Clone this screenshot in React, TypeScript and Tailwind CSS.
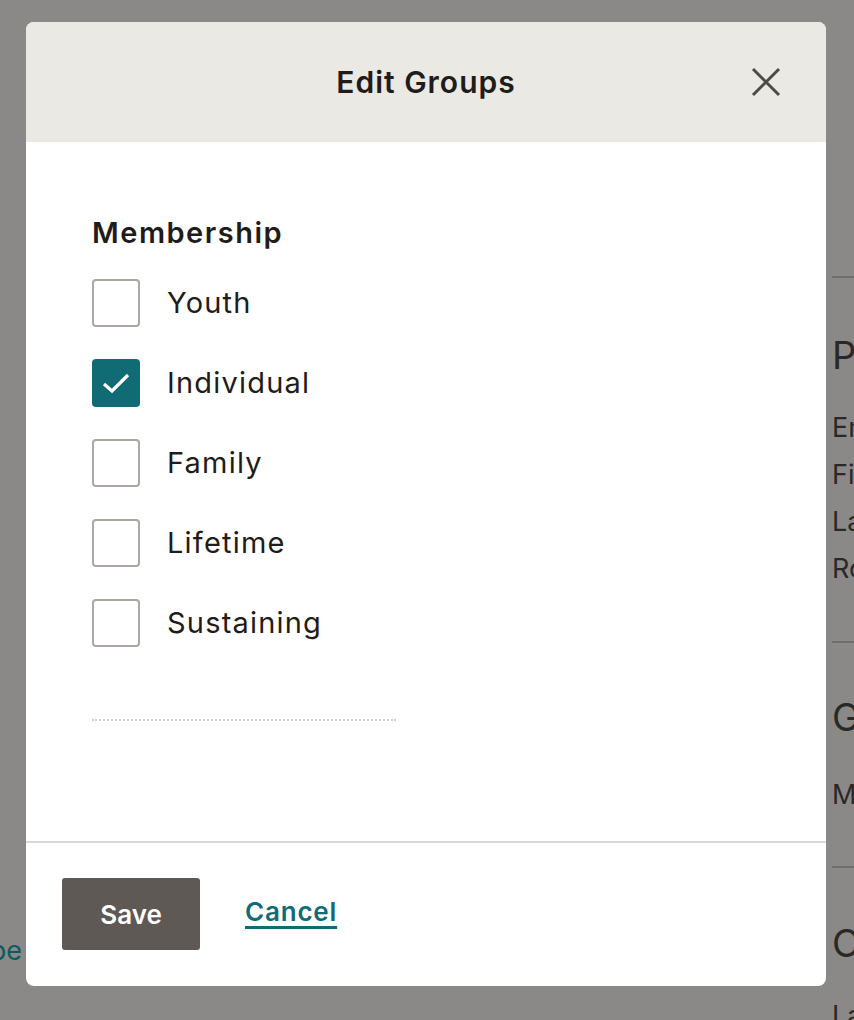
import React from "react";

const items = [
  { label: "Youth", checked: false },
  { label: "Individual", checked: true },
  { label: "Family", checked: false },
  { label: "Lifetime", checked: false },
  { label: "Sustaining", checked: false },
];

export default function App() {
  return (
    <div
      className="relative w-[854px] h-[1020px] overflow-hidden bg-[#8a8987]"
      style={{ fontFamily: "Inter, 'Liberation Sans', sans-serif" }}
    >
      {/* background page (dimmed) */}
      <div className="absolute left-[832px] top-0 w-[200px] text-[#2a2826]">
        <div className="mt-[276px] h-[2px] bg-[#6f6e6c]" />
        <div className="mt-[52px] text-[38px] leading-[50px]">Profile</div>
        <div className="mt-[24px] flex flex-col text-[27px] leading-[47px]">
          <span>Email</span>
          <span>First</span>
          <span>Last</span>
          <span>Role</span>
        </div>
        <div className="mt-[49px] h-[2px] bg-[#6f6e6c]" />
        <div className="mt-[49px] text-[38px] leading-[50px]">Groups</div>
        <div className="mt-[29px] text-[27px] leading-[47px]">Membership</div>
        <div className="mt-[48px] h-[2px] bg-[#6f6e6c]" />
        <div className="mt-[50px] text-[38px] leading-[50px]">Contact</div>
        <div className="mt-[24px] text-[27px] leading-[47px]">Last</div>
      </div>
      <div className="absolute right-[832px] top-[931px] whitespace-nowrap text-[27px] leading-[40px] text-[#0e5a60]">
        Type
      </div>

      {/* modal */}
      <div className="absolute left-[26px] top-[22px] w-[800px] h-[964px] rounded-[8px] bg-white overflow-hidden flex flex-col">
        <div className="relative h-[120px] shrink-0 bg-[#ebe9e4] flex items-center justify-center">
          <h2 className="text-[30px] font-semibold text-[#1f1c1a] tracking-[1px]">Edit Groups</h2>
          <button className="absolute right-[45px] top-[45px] w-[30px] h-[30px] flex items-center justify-center">
            <svg width="30" height="30" viewBox="0 0 30 30" fill="none">
              <path d="M2 2 L28 28 M28 2 L2 28" stroke="#4d4a47" strokeWidth="3" />
            </svg>
          </button>
        </div>

        <div className="flex-1 pl-[66px] pt-[73px]">
          <div className="text-[29px] leading-[36px] font-semibold text-[#1f1c1a] tracking-[1.5px]">Membership</div>
          <div className="mt-[28px] flex flex-col gap-[32px]">
            {items.map((it) => (
              <div key={it.label} className="flex items-center h-[48px]">
                {it.checked ? (
                  <div className="w-[48px] h-[48px] rounded-[4px] bg-[#106b75] flex items-center justify-center">
                    <svg width="28" height="22" viewBox="0 0 28 22" fill="none">
                      <path d="M2 12 L10 19 L26 3" stroke="white" strokeWidth="3.2" />
                    </svg>
                  </div>
                ) : (
                  <div className="w-[48px] h-[48px] rounded-[4px] border-2 border-[#aba7a3] bg-white" />
                )}
                <span className="ml-[27px] text-[29px] text-[#1f1c1a] tracking-[1.2px]">{it.label}</span>
              </div>
            ))}
          </div>
          <div className="mt-[72px] w-[304px] border-t-2 border-dotted border-[#cfcfcf]" />
        </div>

        <div className="h-[145px] shrink-0 border-t-2 border-[#d9d9d9] pl-[36px] pt-[35px] flex items-start gap-[45px]">
          <button className="w-[138px] h-[72px] rounded-[3px] bg-[#5e5955] text-white text-[26px] font-semibold">
            Save
          </button>
          <a className="mt-[14px] text-[26px] font-semibold text-[#0f6b76] tracking-[0.8px] underline decoration-[3px] underline-offset-[5px]">
            Cancel
          </a>
        </div>
      </div>
    </div>
  );
}
